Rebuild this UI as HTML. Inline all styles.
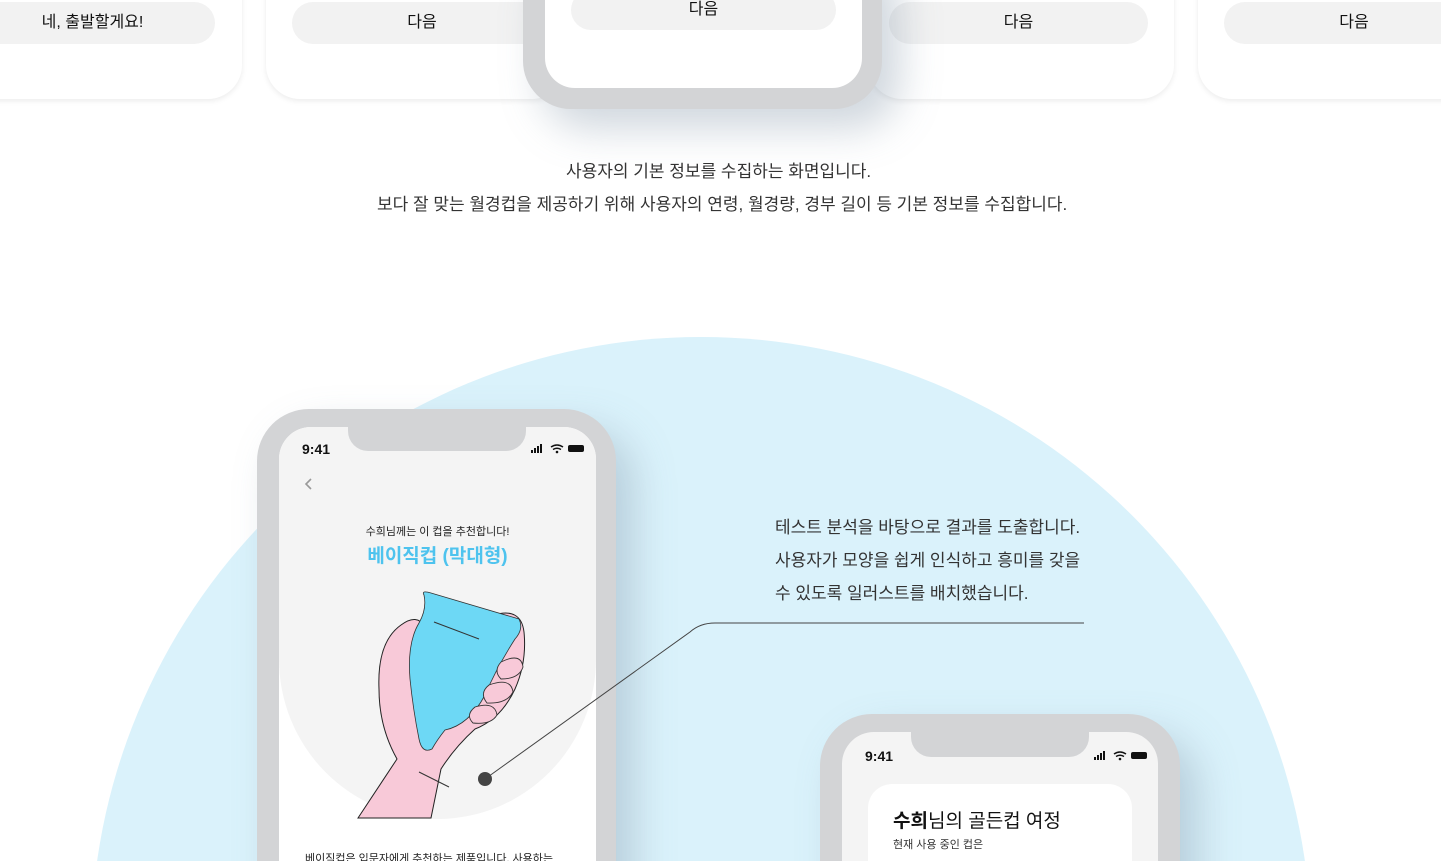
<!DOCTYPE html>
<html><head><meta charset="utf-8"><style>
*{margin:0;padding:0;box-sizing:border-box}
html,body{width:1441px;height:861px;overflow:hidden}
body{background:#fff;font-family:"Liberation Sans","Noto Sans CJK KR",sans-serif;color:#222}
#w{position:relative;width:1441px;height:861px;overflow:hidden}
.a{position:absolute}
.card{position:absolute;background:#fff;border-radius:34px;box-shadow:0 2px 6px rgba(0,0,0,.08)}
.btn{position:absolute;background:#f2f2f2;border-radius:22px;font-size:16px;text-align:center;line-height:42px;color:#111}
.phone{position:absolute;background:#d3d4d6;border-radius:52px;box-shadow:18px 20px 40px rgba(120,140,160,.35)}
.scr{position:absolute;background:#fff;border-radius:34px;overflow:hidden}
.notch{position:absolute;background:#d3d4d6;border-radius:0 0 20px 20px}
p.t{position:absolute;font-size:17px;color:#333;white-space:nowrap}
</style></head><body><div id="w">
<div class="a" style="left:91px;top:337px;width:1220px;height:1220px;border-radius:50%;background:#daf2fb"></div>

<div class="card" style="left:-40px;top:-40px;width:282px;height:139px"></div>
<div class="btn" style="left:-30px;top:2px;width:245px">네, 출발할게요!</div>
<div class="card" style="left:266px;top:-40px;width:300px;height:139px"></div>
<div class="btn" style="left:292px;top:2px;width:260px">다음</div>
<div class="card" style="left:868px;top:-40px;width:306px;height:139px"></div>
<div class="btn" style="left:889px;top:2px;width:259px">다음</div>
<div class="card" style="left:1198px;top:-40px;width:300px;height:139px"></div>
<div class="btn" style="left:1224px;top:2px;width:260px">다음</div>

<div class="phone" style="left:523px;top:-60px;width:359px;height:169px;border-radius:48px"></div>
<div class="scr" style="left:545px;top:-40px;width:317px;height:128px;border-radius:30px"></div>
<div class="btn" style="left:571px;top:-10px;width:265px;line-height:40px">다음</div>

<p class="t" style="left:566px;top:157px">사용자의 기본 정보를 수집하는 화면입니다.</p>
<p class="t" style="left:377px;top:190px">보다 잘 맞는 월경컵을 제공하기 위해 사용자의 연령, 월경량, 경부 길이 등 기본 정보를 수집합니다.</p>

<p class="t" style="left:775px;top:513px">테스트 분석을 바탕으로 결과를 도출합니다.</p>
<p class="t" style="left:775px;top:546px">사용자가 모양을 쉽게 인식하고 흥미를 갖을</p>
<p class="t" style="left:775px;top:579px">수 있도록 일러스트를 배치했습니다.</p>

<div class="phone" style="left:257px;top:409px;width:359px;height:520px"></div>
<div class="scr" style="left:279px;top:427px;width:317px;height:500px;border-radius:32px">
 <div class="a" style="left:0;top:0;width:317px;height:392px;background:#f4f4f4;border-radius:0 0 50% 50%/0 0 160px 160px"></div>
 <div class="notch" style="left:69px;top:0;width:178px;height:24px"></div>
 <div class="a" style="left:23px;top:14px;font-size:14px;font-weight:bold;color:#111">9:41</div>
 <svg class="a" style="left:250px;top:17px" width="58" height="12"><rect x="2" y="6" width="2" height="3" fill="#111"/><rect x="5" y="4" width="2" height="5" fill="#111"/><rect x="8" y="2" width="2" height="7" fill="#111"/><rect x="11" y="0" width="2" height="9" fill="#111"/><path d="M22 3 Q28 -1 34 3 M24 5.5 Q28 3 32 5.5" stroke="#111" stroke-width="1.5" fill="none"/><circle cx="28" cy="8" r="1.3" fill="#111"/><rect x="39" y="1" width="16" height="7" rx="2" fill="#111"/></svg>
 <svg class="a" style="left:24px;top:50px" width="12" height="14"><path d="M8 2 L3 7 L8 12" stroke="#999" stroke-width="1.6" fill="none"/></svg>
 <div class="a" style="left:0;width:317px;top:96px;text-align:center;font-size:11px;color:#222">수희님께는 이 컵을 추천합니다!</div>
 <div class="a" style="left:0;width:317px;top:114px;text-align:center;font-size:19px;font-weight:bold;color:#4ec3ee">베이직컵 (막대형)</div>
 <svg class="a" style="left:0;top:0" width="317" height="400" viewBox="0 0 317 400">
  <path d="M79 391 L118 332 Q100 300 100 262 Q98 215 122 198 Q138 186 146 200 L215 188 Q242 180 245 205 Q248 235 236 262 Q222 292 196 302 Q176 320 162 342 L152 391 Z" fill="#f8c9d8" stroke="#222" stroke-width="1"/>
  <path d="M145 168 Q142 163 152 166 L240 192 Q245 202 236 212 Q218 240 206 268 Q190 298 166 303 Q158 313 153 322 Q143 327 140 312 Q134 282 131 252 Q128 216 140 196 Q148 182 145 168 Z" fill="#6dd8f5" stroke="#333" stroke-width="0.8"/>
  <path d="M155 195 L200 212" stroke="#333" stroke-width="1"/>
  <path d="M222 235 Q242 225 244 240 Q240 252 222 252 Q214 244 222 235 Z M210 258 Q232 250 234 265 Q228 277 208 276 Q200 266 210 258 Z M196 280 Q216 274 218 288 Q212 298 194 296 Q186 288 196 280 Z" fill="#f8c9d8" stroke="#333" stroke-width="0.9"/>
  <path d="M140 345 L170 360" stroke="#333" stroke-width="1"/>
 </svg>
 <div class="a" style="left:199px;top:345px;width:14px;height:14px;border-radius:50%;background:#444"></div>
 <div class="a" style="left:26px;top:423px;font-size:11px;color:#222;white-space:nowrap">베이직컵은 입문자에게 추천하는 제품입니다. 사용하는</div>
</div>

<svg class="a" style="left:0;top:0" width="1441" height="861"><path d="M485 779 L690 632 Q700 623 715 623 L1084 623" stroke="#444" stroke-width="1" fill="none"/></svg>

<div class="phone" style="left:820px;top:714px;width:360px;height:300px"></div>
<div class="scr" style="left:842px;top:732px;width:316px;height:280px;background:#f4f4f4;border-radius:32px">
 <div class="notch" style="left:69px;top:0;width:178px;height:25px"></div>
 <div class="a" style="left:23px;top:16px;font-size:14px;font-weight:bold;color:#111">9:41</div>
 <svg class="a" style="left:250px;top:19px" width="58" height="12"><rect x="2" y="6" width="2" height="3" fill="#111"/><rect x="5" y="4" width="2" height="5" fill="#111"/><rect x="8" y="2" width="2" height="7" fill="#111"/><rect x="11" y="0" width="2" height="9" fill="#111"/><path d="M22 3 Q28 -1 34 3 M24 5.5 Q28 3 32 5.5" stroke="#111" stroke-width="1.5" fill="none"/><circle cx="28" cy="8" r="1.3" fill="#111"/><rect x="39" y="1" width="16" height="7" rx="2" fill="#111"/></svg>
 <div class="a" style="left:26px;top:52px;width:264px;height:240px;background:#fff;border-radius:24px">
  <div class="a" style="left:25px;top:22px;font-size:19px;color:#111;white-space:nowrap"><b>수희</b>님의 골든컵 여정</div>
  <div class="a" style="left:25px;top:52px;font-size:11px;color:#333">현재 사용 중인 컵은</div>
 </div>
</div>
</div></body></html>
